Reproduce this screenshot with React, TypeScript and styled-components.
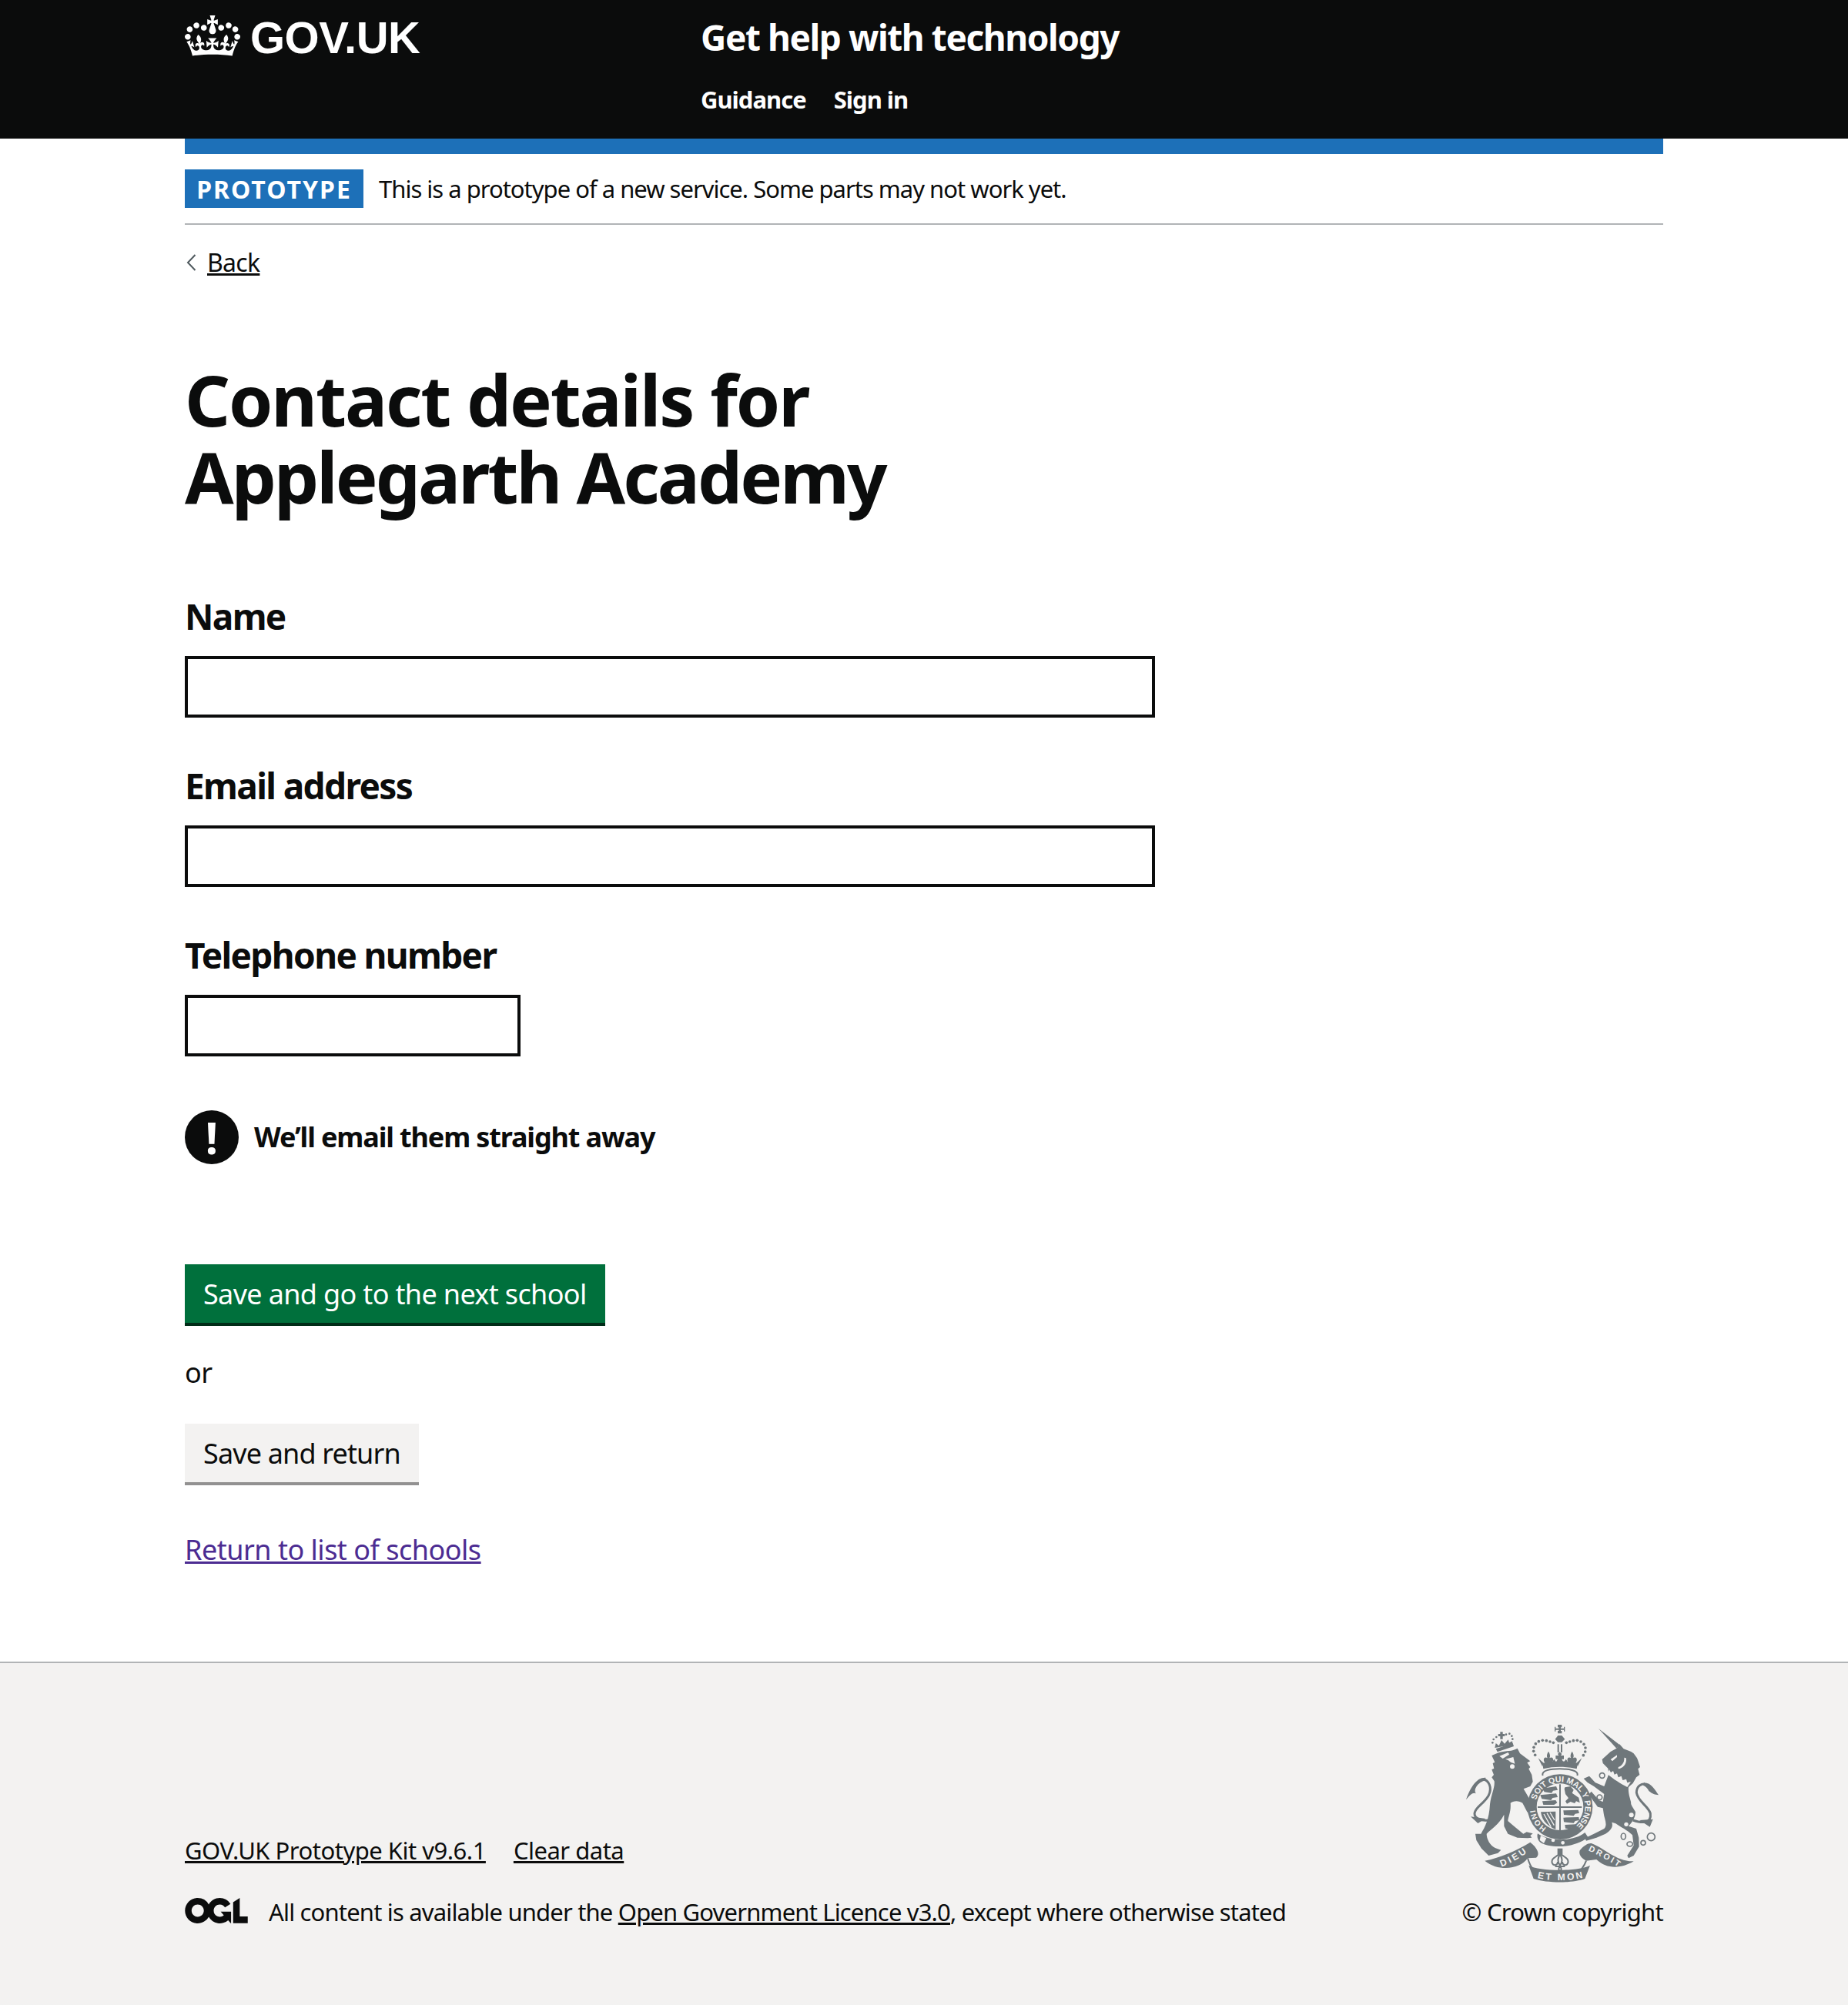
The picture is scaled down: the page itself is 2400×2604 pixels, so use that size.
import React from "react";
import styled, { createGlobalStyle } from "styled-components";

const Global = createGlobalStyle`
  html, body { margin: 0; padding: 0; background: #fff; }
  body { font-family: "Noto Sans", "Open Sans", sans-serif; color: #0b0c0c; }
`;
const Page = styled.div`width: 2400px; min-height: 2604px; display: flex; flex-direction: column;`;
const Container = styled.div`width: 1920px; margin: 0 auto;`;
const Header = styled.header`background: #0b0c0c; height: 180px; color: #fff;`;
const HeaderInner = styled(Container)`display: flex;`;
const Logo = styled.a`width: 670px; display: flex; align-items: flex-start; gap: 13px; padding-top: 20px; color: #fff;`;
const Wordmark = styled.span`font-family: "Liberation Sans", Arial, sans-serif; font-weight: 700; font-size: 58px; line-height: 58px; letter-spacing: -0.5px;`;
const Service = styled.div`display: flex; flex-direction: column;`;
const ServiceName = styled.div`font-weight: 700; font-size: 46px; line-height: 60px; padding-top: 18px; letter-spacing: -1.42px;`;
const Nav = styled.nav`display: flex; gap: 36px; margin-top: 31px;`;
const NavLink = styled.a`font-weight: 700; font-size: 31px; line-height: 40px; color: #fff; letter-spacing: -1px;`;
const Banner = styled.div`align-self: stretch;`;
const BlueBar = styled.div`height: 20px; background: #1d70b8;`;
const Phase = styled.div`display: flex; align-items: center; gap: 20px; padding: 20px 0; border-bottom: 2px solid #b1b4b6;`;
const Tag = styled.strong`background: #1d70b8; color: #fff; height: 50px; width: 232px; display: flex; align-items: center; justify-content: center; font-size: 32px; font-weight: 700; letter-spacing: 2px;`;
const PhaseText = styled.span`font-size: 31px; line-height: 40px; letter-spacing: -1px;`;
const Back = styled.a`display: flex; align-items: center; gap: 14px; margin-top: 29px; padding-left: 2px; font-size: 32px; line-height: 40px; letter-spacing: -0.7px; color: #0b0c0c;`;
const BackLabel = styled.span`text-decoration: underline;`;
const Main = styled(Container)`flex: 1; display: flex; flex-direction: column; align-items: flex-start;`;
const Title = styled.h1`margin: 108px 0 106px; font-size: 92px; line-height: 100px; font-weight: 700;`;
const TitleLine = styled.span<{ $spacing: number }>`display: block; letter-spacing: ${p => p.$spacing}px;`;
const Field = styled.div`display: flex; flex-direction: column; margin-bottom: 63px;`;
const Label = styled.label`font-size: 46px; line-height: 50px; font-weight: 700; margin-bottom: 27px; letter-spacing: -1.65px;`;
const Input = styled.input<{ $w: number }>`width: ${p => p.$w}px; height: 80px; box-sizing: border-box; border: 4px solid #0b0c0c; background: #fff; border-radius: 0; outline: 0; padding: 0;`;
const Warning = styled.div`display: flex; align-items: center; gap: 20px; margin: 7px 0 130px;`;
const WarnIcon = styled.span`width: 70px; height: 70px; border-radius: 50%; background: #0b0c0c; color: #fff; font-size: 58px; font-weight: 700; display: flex; align-items: center; justify-content: center; line-height: 70px;`;
const WarnText = styled.strong`font-size: 36px; line-height: 50px; font-weight: 700; letter-spacing: -1.15px;`;
const Button = styled.button<{ $secondary?: boolean }>`border: 0; border-radius: 0; height: 76px; margin-bottom: 4px; padding: 0 24px; font: inherit; font-size: 36px; display: block;
  letter-spacing: ${p => p.$secondary ? "-0.85px" : "-0.65px"};
  background: ${p => p.$secondary ? "#f3f2f1" : "#00703c"};
  color: ${p => p.$secondary ? "#0b0c0c" : "#fff"};
  box-shadow: 0 4px 0 ${p => p.$secondary ? "#929191" : "#002d18"};
`;
const Or = styled.p`margin: 36px 0 41px; font-size: 36px; line-height: 50px; letter-spacing: -0.5px;`;
const ReturnLink = styled.a`margin-top: 59px; font-size: 36px; line-height: 50px; color: #4c2c92; text-decoration: underline; letter-spacing: -0.5px;`;
const Footer = styled.footer`background: #f3f2f1; border-top: 2px solid #b1b4b6; height: 446px; box-sizing: border-box;`;
const FooterInner = styled(Container)`display: flex; align-items: flex-end; justify-content: space-between; padding-top: 80px;`;
const Meta = styled.div`display: flex; flex-direction: column; gap: 40px;`;
const MetaLinks = styled.div`display: flex; gap: 36px;`;
const FootLink = styled.a`font-size: 31px; line-height: 40px; color: #0b0c0c; text-decoration: underline; letter-spacing: -0.5px;`;
const Licence = styled.div`display: flex; align-items: center; gap: 27px; font-size: 31px; line-height: 40px; letter-spacing: -0.83px;`;
const LicenceLogo = styled.svg`margin-bottom: 4px; flex: none;`;
const InlineLink = styled.a`color: #0b0c0c; text-decoration: underline;`;
const CrestCol = styled.div`width: 260px; display: flex; flex-direction: column; align-items: flex-end; gap: 18px; font-size: 31px; line-height: 40px; letter-spacing: -0.7px; white-space: nowrap;`;

const CROWN = "M25 30.2c3.5 1.5 7.7-.2 9.1-3.7 1.5-3.6-.2-7.8-3.9-9.2-3.6-1.4-7.6.3-9.1 3.9-1.4 3.5.3 7.5 3.9 9zM9 39.5c3.6 1.5 7.8-.2 9.2-3.7 1.5-3.6-.2-7.8-3.9-9.1-3.6-1.5-7.6.2-9.1 3.8-1.4 3.5.3 7.5 3.8 9zM4.4 57.2c3.5 1.5 7.7-.2 9.1-3.8 1.5-3.6-.2-7.7-3.9-9.1-3.5-1.5-7.6.3-9.1 3.8-1.4 3.5.3 7.6 3.9 9.1zm38.3-21.4c3.5 1.5 7.7-.2 9.1-3.8 1.5-3.6-.2-7.7-3.9-9.1-3.6-1.5-7.6.3-9.1 3.8-1.3 3.6.4 7.7 3.9 9.1zm64.4-5.6c-3.6 1.5-7.8-.2-9.1-3.7-1.5-3.6.2-7.8 3.8-9.2 3.6-1.4 7.7.3 9.2 3.9 1.3 3.5-.4 7.5-3.9 9zm15.9 9.3c-3.6 1.5-7.7-.2-9.1-3.7-1.5-3.6.2-7.8 3.7-9.1 3.6-1.5 7.7.2 9.2 3.8 1.5 3.5-.3 7.5-3.8 9zm4.7 17.7c-3.6 1.5-7.8-.2-9.2-3.8-1.5-3.6.2-7.7 3.9-9.1 3.6-1.5 7.7.3 9.2 3.8 1.3 3.5-.4 7.6-3.9 9.1zM89.3 35.8c-3.6 1.5-7.8-.2-9.2-3.8-1.4-3.6.2-7.7 3.9-9.1 3.6-1.5 7.7.3 9.2 3.8 1.4 3.6-.3 7.7-3.9 9.1zM69.7 17.7l8.9 4.7V9.3l-8.9 2.8c-.2-.3-.5-.6-.9-.9L72.4 0H59.6l3.6 11.2c-.3.3-.6.5-.9.9l-8.8-2.8v13.1l8.8-4.7c.3.3.6.7.9.9l-5 15.4v.1c-.2.8-.4 1.6-.4 2.4 0 4.1 3.1 7.5 7 8.1h.2c.3 0 .7.1 1 .1.4 0 .7 0 1-.1h.2c4-.6 7.1-4.1 7.1-8.1 0-.8-.1-1.7-.4-2.4V34l-5.1-15.4c.4-.2.7-.6 1-.9zM66 92.8c16.9 0 32.8 1.1 47.1 3.2 4-16.9 8.9-26.7 14-33.5l-9.6-3.4c1 4.9 1.1 7.2 0 10.2-1.5-1.4-3-4.3-4.2-8.7L108.6 76c2.8-2 5-3.2 7.5-3.3-4.4 9.4-10 11.9-13.6 11.2-4.3-.8-6.3-4.6-5.6-7.9 1-4.7 5.7-5.9 8-.5 4.3-8.7-3-11.4-7.6-8.8 7.1-7.2 7.9-13.5 2.1-21.1-8 6.1-8.1 12.3-4.5 20.8-4.7-5.4-12.1-2.5-9.5 6.2 3.4-5.2 7.9-2 7.2 3.1-.6 4.3-6.4 7.8-13.5 7.2-10.3-.9-10.9-8-11.2-13.8 2.5-.5 7.1 1.8 11 7.3L80.2 60c-4.1 4.4-8 5.3-12.3 5.4 1.4-4.4 8-11.6 8-11.6H55.5s6.4 7.2 7.9 11.6c-4.2-.1-8-1-12.3-5.4l1.4 16.4c3.9-5.5 8.5-7.7 10.9-7.3-.3 5.8-.9 12.8-11.1 13.8-7.2.6-12.9-2.9-13.5-7.2-.7-5 3.8-8.3 7.1-3.1 2.7-8.7-4.6-11.6-9.4-6.2 3.7-8.5 3.6-14.7-4.6-20.8-5.8 7.6-5 13.9 2.2 21.1-4.7-2.6-11.9.1-7.7 8.8 2.3-5.5 7.1-4.2 8.1.5.7 3.3-1.3 7.1-5.7 7.9-3.5.7-9-1.8-13.5-11.2 2.5.1 4.7 1.3 7.5 3.3l-4.7-15.4c-1.2 4.4-2.7 7.2-4.3 8.7-1.1-3-.9-5.3 0-10.2l-9.5 3.4c5 6.9 9.9 16.7 14 33.5 14.8-2.1 30.8-3.2 47.7-3.2z";
const OGL = "M421.5 142.8V.1l-50.7 32.3v161.1h112.4v-50.7zm-122.3-9.6A47.12 47.12 0 0 1 221 97.8c0-26 21.1-47.1 47.1-47.1 16.7 0 31.4 8.7 39.7 21.8l42.7-27.2A97.63 97.63 0 0 0 268.1 0c-36.5 0-68.3 20.1-85.1 49.7A98 98 0 0 0 97.8 0C43.9 0 0 43.9 0 97.8s43.9 97.8 97.8 97.8c36.5 0 68.3-20.1 85.1-49.7a97.76 97.76 0 0 0 149.6 25.4l19.4 22.2h3v-87.8h-80l24.3 27.5zM97.8 145c-26 0-47.1-21.1-47.1-47.1s21.1-47.1 47.1-47.1 47.2 21 47.2 47S123.8 145 97.8 145";

const G = "#6f777b";
const BG = "#f3f2f1";
const crestFont = "Liberation Sans, sans-serif";

const dots = (pts: number[][], r: number) => pts.map(([x, y], i) => <circle key={i} cx={x} cy={y} r={r} />);

/* Drawn on a 3x grid of the 260x205 crest box */
const Crest = () => (
  <svg width="260" height="205" viewBox="0 0 780 615" aria-hidden="true">
    <defs>
      <path id="garterTop" d="M60 294 A97 97 0 1 1 211 398" transform="translate(225 0)" />
      <path id="garterLow" d="M100 402 A97 97 0 0 1 56 325" transform="translate(225 0)" />
      <path id="ribL" d="M150 553 C185 540 220 520 252 496" />
      <path id="ribC" d="M290 597 C335 609 420 609 467 596" />
      <path id="ribR" d="M488 490 C520 505 570 530 612 558" />
    </defs>

    {/* lion's crown */}
    <g fill={G}>
      <path d="M145 28h10v8h8v9h-8v11h-10V45h-8v-9h8z" />
      <path d="M124 90 L128 72 L140 82 L150 60 L162 74 L176 58 L180 70 L192 64 L194 78Z" />
      <path d="M128 94 L194 72 L198 84 L134 106Z" />
      {dots([[115,70],[119,57],[130,48],[168,38],[181,35],[190,44],[193,56]], 4)}
    </g>

    {/* lion */}
    <path fill={G} d="M112 120 L140 108 C170 100 190 105 212 92 L222 112 L240 125 L262 142 L250 148 L262 165 L256 172 L268 195 L272 222 L262 240 L236 250 L286 335 L290 352 L272 358 L250 340 L232 305 C220 295 195 295 185 305 C188 340 175 360 175 375 L195 392 L235 425 L248 418 L272 424 L262 432 L268 440 L252 442 L212 440 L175 425 L160 395 L160 350 C140 390 110 405 92 425 C92 445 105 470 125 480 L148 488 L136 500 L100 510 L72 482 L52 450 L48 425 L70 425 C85 400 102 370 105 310 C110 270 125 245 122 220 L112 205 L120 195 L112 175 L121 170 L116 150 L124 146Z" />
    <path fill={BG} d="M142 122 L176 108 L180 116 L155 132Z M165 134 L196 126 L202 152 L186 146 L176 138Z" />
    <circle cx="192" cy="163" r="9" fill={BG} />
    <path fill="none" stroke={G} strokeWidth="9" d="M98 372 C68 375 44 365 45 345 C48 320 80 310 100 275 C115 245 100 215 78 212" />
    <path fill={G} d="M88 206 C55 204 30 240 12 292 C28 272 40 262 50 268 C40 252 55 226 88 216Z M30 358 L88 366 L58 384Z" />

    {/* royal crown */}
    <g fill={G} transform="translate(225 0)">
      <path d="M144 0h16v10h-4v4h12v-6h4v18h-4v-6h-12v4h4v10h-16V24h4v-4h-12v6h-4V8h4v6h12v-4h-4z" />
      <path d="M145 42 L160 42 L172 56 L160 68 L145 68 L134 56Z" />
      <rect x="143" y="76" width="6" height="32" />
      <rect x="156" y="76" width="6" height="32" />
      {dots([[56,118],[50,103],[51,88],[58,74],[70,65],[85,61],[100,62],[114,66],[127,70],[178,70],[191,66],[205,62],[220,61],[234,66],[246,76],[252,90],[251,105],[244,119]], 5.5)}
      <path d="M84 150 C130 140 175 140 222 150 L218 172 C175 162 130 162 88 172Z" />
      <path d="M108 104 C114 114 116 122 112 130 C120 124 128 128 126 140 L122 148 L94 150 L90 140 C88 128 96 124 104 130 C100 122 102 114 108 104Z" />
      <path d="M200 104 C206 114 208 122 204 130 C212 124 220 128 218 140 L214 150 L186 148 L182 140 C180 128 188 124 196 130 C192 122 194 114 200 104Z" />
      <path d="M152 106 l8 8 l-4 6 h12 v14 h-8 l6 12 h-28 l6 -12 h-8 v-14 h12 l-4 -6z" />
      <path d="M68 130 L90 150 L84 162Z M238 130 L216 150 L222 162Z M130 134 l8 12 h-16z M176 134 l8 12 h-16z" />
      <path fill="none" stroke={G} strokeWidth="6" d="M86 198 C78 178 118 172 152 172 C188 172 228 178 220 198" />
    </g>

    {/* garter and shield */}
    <g transform="translate(225 0)">
      <circle cx="153" cy="320" r="127" fill={G} />
      <circle cx="153" cy="320" r="91" fill={BG} />
      <rect x="150" y="232" width="6" height="184" fill={G} />
      <rect x="66" y="318" width="172" height="6" fill={G} />
      <g fill={G}>
        <path d="M84 248 l54 -8 l6 14 l-18 3 l-6 9 l-28 -4z" />
        <path d="M76 274 l62 -6 l6 14 l-20 3 l-6 9 l-36 -5z" />
        <path d="M84 298 l52 -4 l6 10 l-12 8 l-42 0z" />
        <path d="M172 244 l22 -4 l12 14 l-6 12 l26 18 l4 20 l-14 -6 l-6 8 l-16 -6 l-14 8 l-6 -10 l12 -12 l-12 -16 l-4 -20z" />
        <path d="M166 334 l58 -2 l4 12 l-16 3 l-6 8 l-38 -4z" />
        <path d="M166 362 l60 -2 l2 12 l-16 3 l-6 8 l-38 -4z" />
        <path d="M172 390 l42 -2 l-6 10 l-10 2 l-6 6 l-18 -2z" />
      </g>
      <path fill={G} d="M78 340 L136 338 L136 408 C110 398 84 380 78 340Z" />
      <path fill="none" stroke={BG} strokeWidth="4" d="M90 348 L118 398 M102 344 L130 392 M114 342 L132 372" />
      <path fill={G} d="M66 424 C105 452 200 460 250 420 L262 438 C205 485 110 480 76 458 C66 450 62 436 66 424Z" />
      <g fill={BG}><circle cx="126" cy="450" r="7" /><circle cx="164" cy="460" r="7" /></g>
      <path fill={BG} d="M78 432 L100 442 L90 462 L74 450Z" />
    </g>
    <text fontFamily={crestFont} fontSize="32" fontWeight="700" fill={BG}><textPath href="#garterTop" textLength="362" lengthAdjust="spacing">SOIT QUI MAL Y PENSE</textPath></text>
    <text fontFamily={crestFont} fontSize="30" fontWeight="700" fill={BG}><textPath href="#garterLow" textLength="84" lengthAdjust="spacing">HONI</textPath></text>

    {/* fleur-de-lis and pedestal */}
    <g transform="translate(225 0)">
      <rect x="143" y="482" width="20" height="22" fill={G} />
      <path fill="none" stroke={G} strokeWidth="6" d="M153 500 C138 518 118 518 122 538 C128 552 144 548 144 534 M153 500 C168 518 188 518 184 538 C178 552 162 548 162 534 M153 505 C143 520 143 535 153 548 C163 535 163 520 153 505 M134 552 H172 M153 552 C146 560 146 566 153 570 C160 566 160 560 153 552" />
    </g>

    {/* ribbons */}
    <path fill={G} d="M85 530 C140 520 210 490 262 458 C290 480 302 505 285 518 L252 520 C225 562 140 575 85 530Z" />
    <path fill={G} d="M256 548 C300 572 450 572 495 548 L475 600 C425 618 330 618 275 600Z" />
    <path fill={G} d="M455 490 C470 470 490 460 500 462 C550 480 600 535 665 532 C620 560 560 565 520 525 L480 530 C460 520 450 505 455 490Z" />
    <path fill="none" stroke={G} strokeWidth="6" d="M252 520 C258 540 262 550 272 562 M480 530 C476 542 470 552 462 562" />
    <text fontFamily={crestFont} fontSize="36" fontWeight="700" fill={BG}><textPath href="#ribL" textLength="112" lengthAdjust="spacing">DIEU</textPath></text>
    <text fontFamily={crestFont} fontSize="36" fontWeight="700" fill={BG}><textPath href="#ribC" textLength="178" lengthAdjust="spacing">ET MON</textPath></text>
    <text fontFamily={crestFont} fontSize="32" fontWeight="700" fill={BG}><textPath href="#ribR" textLength="132" lengthAdjust="spacing">DROIT</textPath></text>

    {/* unicorn */}
    <g transform="translate(450 0)">
      <path fill={G} d="M78 15 L160 78 L148 92Z" />
      <path fill={G} d="M148 92 L160 76 L176 94 L205 105 L215 112 L228 130 L232 140 L240 165 L232 172 L238 195 L225 205 L212 228 L195 243 C192 270 205 295 207 315 L222 340 C222 365 205 385 195 395 L225 405 L235 440 L236 475 L215 510 L195 520 L190 510 L215 470 L210 430 C190 410 165 400 145 385 L130 380 C135 395 130 410 105 425 L70 440 L30 452 L25 442 L60 425 L100 405 C115 390 100 365 98 345 L95 325 L75 320 L40 272 L50 260 L80 295 L95 300 L100 270 L60 240 L35 225 L20 210 L42 200 L65 225 L100 240 L118 192 L115 170 L95 150 L92 135 L125 105Z" />
      <path fill={BG} d="M125 135 L150 118 L150 126 L132 142Z M155 165 C170 160 180 145 178 128 L185 130 C190 150 175 170 155 172Z" />
      <path fill={BG} d="M113 192 L120 175 L126 186 L135 180 L140 194 L150 190 L155 205 L167 200 L172 216 L186 212 L190 226 L204 222 L190 243 C165 230 135 212 113 192Z" />
      <path fill="none" stroke={G} strokeWidth="9" d="M212 372 C250 385 285 385 280 345 C270 315 232 300 226 265 C226 238 245 230 258 230" />
      <path fill={G} d="M255 226 C285 226 298 255 312 274 C298 272 288 270 274 258 C270 248 262 240 252 236Z M238 372 L290 368 L278 398Z" />
      <g fill={BG}><circle cx="215" cy="306" r="10" /><circle cx="206" cy="352" r="9" /><circle cx="186" cy="388" r="8" /></g>
      <g fill="none" stroke={G} strokeWidth="5">
        <circle cx="92" cy="198" r="10" />
        <circle cx="82" cy="283" r="10" />
        <ellipse cx="175" cy="435" rx="9" ry="12" />
        <ellipse cx="200" cy="465" rx="11" ry="9" />
        <circle cx="252" cy="460" r="9" />
        <circle cx="283" cy="437" r="15" />
      </g>
    </g>
  </svg>
);

export default function App() {
  return (
    <Page>
      <Global />
      <Header>
        <HeaderInner>
          <Logo>
            <svg width="72" height="53" viewBox="0 0 132 97" fill="#fff" aria-hidden="true"><path d={CROWN} /></svg>
            <Wordmark>GOV.UK</Wordmark>
          </Logo>
          <Service>
            <ServiceName>Get help with technology</ServiceName>
            <Nav>
              <NavLink>Guidance</NavLink>
              <NavLink>Sign in</NavLink>
            </Nav>
          </Service>
        </HeaderInner>
      </Header>
      <Main>
        <Banner>
          <BlueBar />
          <Phase>
            <Tag>PROTOTYPE</Tag>
            <PhaseText>This is a prototype of a new service. Some parts may not work yet.</PhaseText>
          </Phase>
        </Banner>
        <Back>
          <svg width="13" height="22" viewBox="0 0 13 22" fill="none" stroke="#505a5f" strokeWidth="2" aria-hidden="true"><path d="M11.5 1 L2 11 L11.5 21" /></svg>
          <BackLabel>Back</BackLabel>
        </Back>
        <Title>
          <TitleLine $spacing={-2.1}>Contact details for</TitleLine>
          <TitleLine $spacing={-2.9}>Applegarth Academy</TitleLine>
        </Title>
        <Field>
          <Label>Name</Label>
          <Input $w={1260} />
        </Field>
        <Field>
          <Label>Email address</Label>
          <Input $w={1260} />
        </Field>
        <Field>
          <Label>Telephone number</Label>
          <Input $w={436} />
        </Field>
        <Warning>
          <WarnIcon>!</WarnIcon>
          <WarnText>We’ll email them straight away</WarnText>
        </Warning>
        <Button>Save and go to the next school</Button>
        <Or>or</Or>
        <Button $secondary>Save and return</Button>
        <ReturnLink>Return to list of schools</ReturnLink>
      </Main>
      <Footer>
        <FooterInner>
          <Meta>
            <MetaLinks>
              <FootLink>GOV.UK Prototype Kit v9.6.1</FootLink>
              <FootLink>Clear data</FootLink>
            </MetaLinks>
            <Licence>
              <LicenceLogo width="82" height="33" viewBox="0 0 483.2 195.7" fill="#0b0c0c" aria-hidden="true"><path d={OGL} /></LicenceLogo>
              <span>All content is available under the <InlineLink>Open Government Licence v3.0</InlineLink>, except where otherwise stated</span>
            </Licence>
          </Meta>
          <CrestCol>
            <Crest />
            <span>© Crown copyright</span>
          </CrestCol>
        </FooterInner>
      </Footer>
    </Page>
  );
}
